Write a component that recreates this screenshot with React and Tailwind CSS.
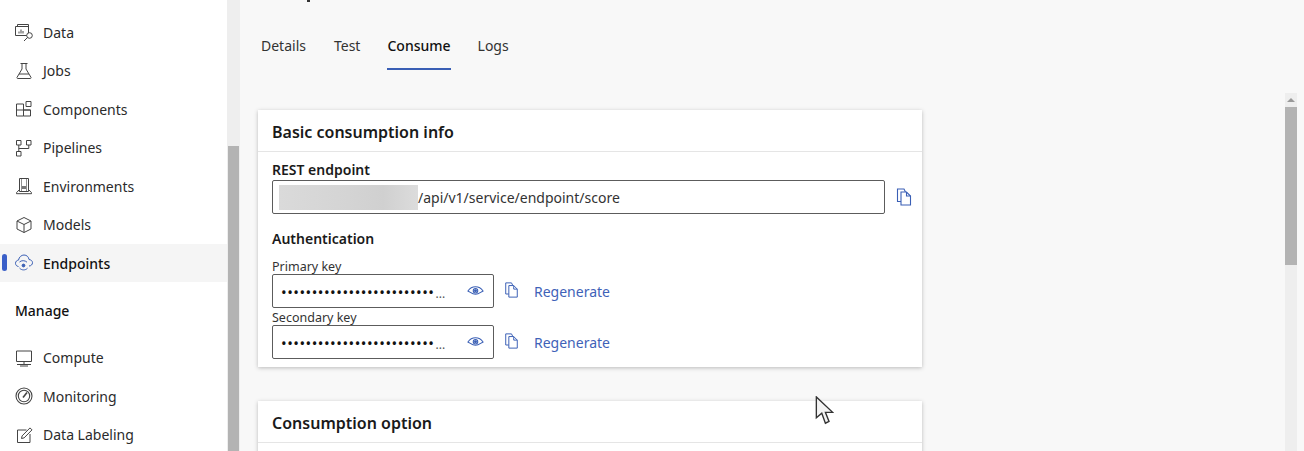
const Icon = ({ children, color = "#444", className = "" }) => (
  <svg
    viewBox="0 0 20 20"
    fill="none"
    stroke={color}
    strokeWidth="1"
    className={`h-5 w-5 shrink-0 ${className}`}
  >
    {children}
  </svg>
);

const DataIcon = () => (
  <Icon>
    <path d="M3.500 1.500h11v2.500" />
    <path d="M3.500 1.500v2M1.500 3.500h13v9h-13z" />
    <path d="M5 10.500V8.500M7 10.500V6.500M9 10.500V8" strokeWidth="1.200" stroke="#666" />
    <circle cx="15.500" cy="12.500" r="2.800" fill="#fff" />
    <path d="M13.500 14.500l-3.500 3.500" />
  </Icon>
);

const JobsIcon = () => (
  <Icon>
    <path d="M6.500 2.500h7M8 2.500v5.500l-5 8.400c-.3.600.1 1.100.7 1.100h12.600c.6 0 1-.5.7-1.100L12 8V2.500" />
    <path d="M5 13h10" />
  </Icon>
);

const ComponentsIcon = () => (
  <Icon>
    <path d="M2.500 5h7v12h-7zM2.500 11h14v6h-7M9.500 11h7" />
    <path d="M12 2.500h5v5h-5z" />
  </Icon>
);

const PipelinesIcon = () => (
  <Icon>
    <path d="M2.500 2.500h4.500v4.500h-4.500zM12.500 2.500h4.500v4.500h-4.500zM2.500 13.500h4.500v4.500h-4.500z" />
    <path d="M4.800 7v6.500M4.800 10.500h10v-3.500" />
  </Icon>
);

const EnvironmentsIcon = () => (
  <Icon>
    <path d="M5.500 2.500h9v13h-9z" />
    <path d="M7.500 2.500v13M12.500 2.500v13" strokeWidth="0.6" />
    <path d="M8 10h4v3H8z" fill="#777" stroke="none" />
    <path d="M5.500 13.500l-3 3.200v1h15v-1l-3-3.200" />
  </Icon>
);

const ModelsIcon = () => (
  <Icon>
    <path d="M10 2.500l7 3.500v8l-7 3.500-7-3.500V6z" />
    <path d="M3 6l7 3.500L17 6M10 9.500v8" />
  </Icon>
);

const EndpointsIcon = () => (
  <Icon color="#3a5fb5">
    <path d="M4.500 13.500C2.500 13.300 1.500 11.800 1.500 10.300c0-1.800 1.300-3 3-3.200C5 4 7.500 2 10 2c2.800 0 4.700 2 5 4.500 2 .2 3.500 1.500 3.500 3.200 0 1.800-1.500 3.300-3.500 3.300" />
    <path d="M5.500 9c1.800-1.800 5.500-1.800 7.500.2M5.500 15c2 2.500 6 2.500 8 .2" />
    <circle cx="9.500" cy="12.500" r="1.400" fill="#3a5fb5" />
  </Icon>
);

const ComputeIcon = () => (
  <Icon>
    <path d="M2.500 3h15v10.500h-15z" />
    <path d="M10 13.500v3M3 16.500h14M6 18h8" />
  </Icon>
);

const MonitoringIcon = () => (
  <Icon>
    <circle cx="10" cy="10" r="8" strokeWidth="1.100" />
    <circle cx="10" cy="10" r="5.700" strokeWidth="1.100" />
    <path d="M9 11.500l4-5" strokeWidth="1.600" />
  </Icon>
);

const LabelingIcon = () => (
  <Icon>
    <path d="M3.500 5h9M3.500 5v12.500h12.500V9" />
    <path d="M7.500 13.500l.6-2.600 7.900-8 2 2-7.900 8z" />
  </Icon>
);

const CopyIcon = ({ className = "" }) => (
  <svg viewBox="0 0 16 18" fill="none" stroke="#3a5fb5" strokeWidth="1.100" className={`shrink-0 ${className}`}>
    <path d="M5 13.500H1.500V1h6.500l1.500 3" />
    <path d="M5 4h5.500L14.500 8v9H5z" fill="#fff" />
    <path d="M10.500 4v4h4" />
  </svg>
);

const EyeIcon = () => (
  <svg viewBox="0 0 18 12" fill="none" stroke="#3a5fb5" strokeWidth="1.100" className="h-3 w-[17px] shrink-0">
    <path d="M1 6c2-3 5-4.500 8-4.500S15 3 17 6c-2 .8-4.500 3.500-8 3.500S3 6.800 1 6z" />
    <circle cx="9" cy="5.800" r="2.400" />
    <circle cx="9" cy="5.800" r="1" fill="#3a5fb5" />
  </svg>
);

const NavItem = ({ icon, label, active }) => (
  <div className={`flex h-[38.4px] items-center pl-[14px] ${active ? "relative bg-[#f5f5f5] font-medium text-[#111]" : "text-[#2b2b2b]"}`}>
    {active && <span className="absolute left-[2px] top-[10px] h-[17px] w-[5px] rounded-full bg-[#3a5fc8]" />}
    {icon}
    <span className={`ml-[9px] ${active ? "pt-[1px]" : ""}`}>{label}</span>
  </div>
);

const KeyField = ({ label }) => (
  <div>
    <div className="h-[17px] pt-[2px] text-[12.5px] leading-[15px] text-[#333]">{label}</div>
    <div className="flex items-center">
      <div className="flex h-[34px] w-[222px] items-center rounded-[2px] border border-[#5c5c5c] pl-[8px] pr-[9px]">
        <span className="relative top-[1px] flex items-baseline whitespace-nowrap text-[#111]">
          <span className="text-[15px] leading-none tracking-[0.5px]">•••••••••••••••••••••••••</span>
          <span className="ml-[1px] text-[12px] leading-none text-[#555]">...</span>
        </span>
        <span className="ml-auto">
          <EyeIcon />
        </span>
      </div>
      <CopyIcon className="ml-[10px] h-[16px] w-[15px] -translate-y-[1px]" />
      <a className="ml-[15px] text-[#3f62b8]">Regenerate</a>
    </div>
  </div>
);

export default function App() {
  return (
    <div className="flex h-[451px] w-[1304px] overflow-hidden bg-[#f8f8f8] font-['Noto_Sans',sans-serif] text-[14px]">
      <aside className="w-[227px] shrink-0 bg-white pt-[13.4px]">
        <NavItem icon={<DataIcon />} label="Data" />
        <NavItem icon={<JobsIcon />} label="Jobs" />
        <NavItem icon={<ComponentsIcon />} label="Components" />
        <NavItem icon={<PipelinesIcon />} label="Pipelines" />
        <NavItem icon={<EnvironmentsIcon />} label="Environments" />
        <NavItem icon={<ModelsIcon />} label="Models" />
        <NavItem icon={<EndpointsIcon />} label="Endpoints" active />
        <div className="flex h-[56.6px] items-center pl-[15px] font-medium text-[#111]">Manage</div>
        <NavItem icon={<ComputeIcon />} label="Compute" />
        <NavItem icon={<MonitoringIcon />} label="Monitoring" />
        <NavItem icon={<LabelingIcon />} label="Data Labeling" />
      </aside>

      <div className="flex w-[13px] shrink-0 flex-col bg-[#eeeeee] px-[1px]">
        <div className="h-[146px]" />
        <div className="flex-1 bg-[#b3b3b3]" />
      </div>

      <main className="flex min-w-0 flex-1">
        <div className="w-[1045px] shrink-0 pl-[18px]">
          <div className="ml-[49px] h-[2px] w-[3px] bg-[#333]" />
          <nav className="mt-[31px] flex h-[36px] text-[#333]">
            <div className="ml-[3px] pt-[2px]">Details</div>
            <div className="ml-[28px] pt-[2px]">Test</div>
            <div className="ml-[27px] h-[36.500px] border-b-[2.500px] border-[#3a5fb5] pt-[2px] font-medium text-[#111]">Consume</div>
            <div className="ml-[27px] pt-[2px]">Logs</div>
          </nav>

          <section className="mt-[41px] h-[257px] w-[664px] bg-white shadow-[0_1px_4px_rgba(0,0,0,0.25)]">
            <h2 className="flex h-[42px] items-center border-b border-[#e5e5e5] pl-[14px] pt-[2px] text-[16px] font-semibold text-[#1a1a1a]">
              Basic consumption info
            </h2>
            <div className="pl-[14px] pt-[8px]">
              <div className="h-[19px] font-semibold leading-[19px] text-[#1a1a1a]">REST endpoint</div>
              <div className="flex items-center pt-[1px]">
                <div className="flex h-[34px] w-[613px] items-center rounded-[2px] border border-[#5c5c5c] pl-[6px] text-[#333]">
                  <span className="h-[25px] w-[139px] bg-[linear-gradient(90deg,#dadada,#d4d4d4_50%,#d0d0d0_75%,#dcdcdc)]" />
                  <span>/api/v1/service/endpoint/score</span>
                </div>
                <CopyIcon className="ml-[11px] h-[18px] w-4" />
              </div>
              <div className="mt-[15px] h-[19px] font-semibold leading-[19px] text-[#1a1a1a]">Authentication</div>
              <div className="mt-[9px]">
                <KeyField label="Primary key" />
                <KeyField label="Secondary key" />
              </div>
            </div>
          </section>

          <section className="mt-[34px] h-[120px] w-[664px] bg-white shadow-[0_1px_4px_rgba(0,0,0,0.25)]">
            <h2 className="flex h-[42px] items-center border-b border-[#e5e5e5] pl-[14px] pt-[2px] text-[16px] font-semibold text-[#1a1a1a]">
              Consumption option
            </h2>
          </section>
        </div>

        <div className="mt-[93px] flex w-[12px] shrink-0 flex-col bg-[#eeeeee]">
          <div className="flex h-[14px] items-center justify-center">
            <span className="h-0 w-0 border-x-[4px] border-b-[4px] border-x-transparent border-b-[#999]" />
          </div>
          <div className="h-[158px] bg-[#b3b3b3]" />
        </div>
      </main>

      <svg viewBox="0 0 20 32" className="absolute left-[815px] top-[396px] h-[29px] w-[19px]" fill="#f4f4f4" stroke="#333" strokeWidth="1.500">
        <path d="M1 1v23l6-5 4 11 4-2-4-10h8z" />
      </svg>
    </div>
  );
}
